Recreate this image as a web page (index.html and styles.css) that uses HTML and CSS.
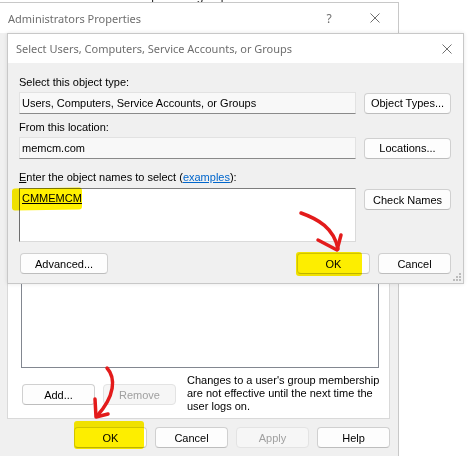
FILE: index.html
```html
<!DOCTYPE html>
<html>
<head>
<meta charset="utf-8">
<title>Select Users</title>
<link rel="stylesheet" href="styles.css">
</head>
<body>
<div class="desk">
  <div class="peek"><span>Membership of this group</span></div>

  <div class="win outer">
    <div class="titlebar">
      <span class="ttl">Administrators Properties</span>
      <span class="cap help">?</span>
      <span class="cap close"><svg width="10" height="10" viewBox="0 0 10 10"><path d="M0.5 0.5L9.5 9.5M9.5 0.5L0.5 9.5" stroke="#6f6f6f" stroke-width="1" fill="none"/></svg></span>
    </div>
    <div class="obody">
      <div class="panel">
        <div class="listbox"></div>
        <div class="prow">
          <button class="btn w73 mt10 ml1">Add...</button>
          <button class="btn w73 mt10 dis">Remove</button>
          <p class="note">Changes to a user's group membership<br>are not effective until the next time the<br>user logs on.</p>
        </div>
      </div>
      <div class="brow">
        <button class="btn w73">OK</button>
        <button class="btn w73">Cancel</button>
        <button class="btn w73 dis">Apply</button>
        <button class="btn w73">Help</button>
      </div>
    </div>
  </div>

  <div class="win dlg">
    <div class="titlebar dtitle">
      <span class="ttl">Select Users, Computers, Service Accounts, or Groups</span>
      <span class="cap close small"><svg width="10" height="10" viewBox="0 0 10 10"><path d="M0.5 0.5L9.5 9.5M9.5 0.5L0.5 9.5" stroke="#6f6f6f" stroke-width="1" fill="none"/></svg></span>
    </div>
    <div class="dbody">
      <div class="lbl l1">Select this object type:</div>
      <div class="row r1">
        <div class="field">Users, Computers, Service Accounts, or Groups</div>
        <button class="btn side">Object Types...</button>
      </div>
      <div class="lbl l2">From this location:</div>
      <div class="row r2">
        <div class="field">memcm.com</div>
        <button class="btn side">Locations...</button>
      </div>
      <div class="lbl l3"><u>E</u>nter the object names to select (<span class="link">examples</span>):</div>
      <div class="row r3">
        <div class="tarea"><u>CMMEMCM</u></div>
        <button class="btn side top1">Check Names</button>
      </div>
      <div class="drow">
        <button class="btn adv">Advanced...</button>
        <span class="spacer"></span>
        <button class="btn w73">OK</button>
        <button class="btn w73">Cancel</button>
      </div>
    </div>
    <svg class="grip" width="8" height="8" viewBox="0 0 8 8">
      <rect x="6" y="0" width="2" height="2" fill="#bcbcbc"/>
      <rect x="3" y="3" width="2" height="2" fill="#bcbcbc"/>
      <rect x="6" y="3" width="2" height="2" fill="#bcbcbc"/>
      <rect x="0" y="6" width="2" height="2" fill="#bcbcbc"/>
      <rect x="3" y="6" width="2" height="2" fill="#bcbcbc"/>
      <rect x="6" y="6" width="2" height="2" fill="#bcbcbc"/>
    </svg>
  </div>

  <div class="hl hl1"></div>
  <div class="hl hl2"></div>
  <div class="hl hl3"></div>

  <svg class="ink" width="468" height="456" viewBox="0 0 468 456">
    <g stroke="#e31b1b" stroke-width="3.5" fill="none" stroke-linecap="round" stroke-linejoin="round">
      <path d="M301 213 C318 219 334 228 338 249"/>
      <path d="M318 240 L337 250 L341 235"/>
      <path d="M107 368 C116 378 115 396 97 416"/>
      <path d="M95 399 L96 417 L108 414"/>
    </g>
  </svg>
</div>
</body>
</html>
```
FILE: styles.css
```css
* { box-sizing: border-box; margin: 0; padding: 0; }
html, body { width: 468px; height: 456px; overflow: hidden; background: #fff; }
body { font-family: "Liberation Sans", Arial, sans-serif; font-size: 11px; color: #000; }

.desk { position: relative; width: 468px; height: 456px; overflow: hidden; background: #fff; }

.peek { position: absolute; left: 92px; top: 0; height: 3px; overflow: hidden; }
.peek span { display: block; margin-top: -10px; font-size: 12px; line-height: 13px; color: #222; white-space: nowrap; }

.win { position: absolute; background: #f0f0f0; border: 1px solid #c8c8c8; }
.outer { left: -1px; top: 2px; width: 400px; height: 470px; display: flex; flex-direction: column; }
.dlg { left: 7px; top: 33px; width: 457px; height: 251px; display: flex; flex-direction: column; box-shadow: 0 0 4px rgba(0,0,0,0.10); }

.titlebar { height: 30px; flex: none; background: #fff; display: flex; align-items: center; padding-left: 8px; }
.dtitle { height: 29px; }
.ttl { font-family: "Noto Sans", "Open Sans", sans-serif; font-size: 11px; color: #6e6e6e; white-space: nowrap; flex: 1; }
.cap { width: 46px; height: 30px; display: flex; align-items: center; justify-content: center; flex: none; color: #6e6e6e; font-family: "Noto Sans", sans-serif; font-size: 12px; }
.cap.small { width: 32px; height: 29px; }

/* outer window body */
.obody { flex: 1; display: flex; flex-direction: column; padding: 27px 8px 0 7px; }
.panel { height: 359px; background: #fff; border: 1px solid #d9d9d9; display: flex; flex-direction: column; padding: 0 10px 5px 13px; }
.listbox { flex: 1; background: #fff; border: 1px solid #828790; }
.prow { display: flex; align-items: flex-start; margin-top: 6px; gap: 8px; }
.note { margin-left: 3px; line-height: 13px; color: #000; white-space: nowrap; }
.brow { display: flex; justify-content: flex-end; gap: 8px; margin-top: 8px; padding-right: 0; }

/* buttons */
.btn { height: 21px; font-family: inherit; font-size: 11px; color: #000; background: #fdfdfd; border: 1px solid #d0d0d0; border-bottom-color: #bdbdbd; border-radius: 4px; display: flex; align-items: center; justify-content: center; flex: none; }
.btn.dis { color: #a0a0a0; background: #f6f6f6; border-color: #e3e3e3; }
.w73 { width: 73px; }
.mt10 { margin-top: 10px; }
.ml1 { margin-left: 1px; }
.side { width: 87px; }
.top1 { margin-top: 1px; align-self: flex-start; }
.adv { width: 88px; margin-left: 1px; }

/* inner dialog body */
.dbody { flex: 1; padding: 13px 12px 0 11px; display: flex; flex-direction: column; }
.lbl { line-height: 13px; white-space: nowrap; }
.l2 { margin-top: 7px; }
.l3 { margin-top: 12px; }
.link { color: #0066cc; text-decoration: underline; }
.row { display: grid; grid-template-columns: 337px 87px; column-gap: 8px; align-items: center; }
.r1 { margin-top: 3px; }
.r2 { margin-top: 3px; }
.r3 { margin-top: 4px; align-items: start; }
.field { height: 22px; background: #f8f8f8; border: 1px solid #e2e2e2; border-bottom-color: #8a8a8a; padding-left: 2px; display: flex; align-items: center; white-space: nowrap; overflow: hidden; }
.tarea { height: 54px; background: #fff; border: 1px solid #dadada; border-top-color: #7d7d7d; border-left-color: #6e6e6e; padding: 3px 2px; line-height: 13px; }
.drow { display: flex; gap: 8px; margin-top: 11px; }
.spacer { flex: 1; }

.grip { position: absolute; right: 2px; bottom: 2px; }

/* marker highlights */
.hl { position: absolute; background: #fff000; mix-blend-mode: multiply; border-radius: 3px; }
.hl1 { left: 12px; top: 188px; width: 70px; height: 22px; transform: skewY(-1deg); }
.hl2 { left: 296px; top: 252px; width: 66px; height: 24px; }
.hl3 { left: 74px; top: 421px; width: 70px; height: 28px; }

.ink { position: absolute; left: 0; top: 0; pointer-events: none; }
```
